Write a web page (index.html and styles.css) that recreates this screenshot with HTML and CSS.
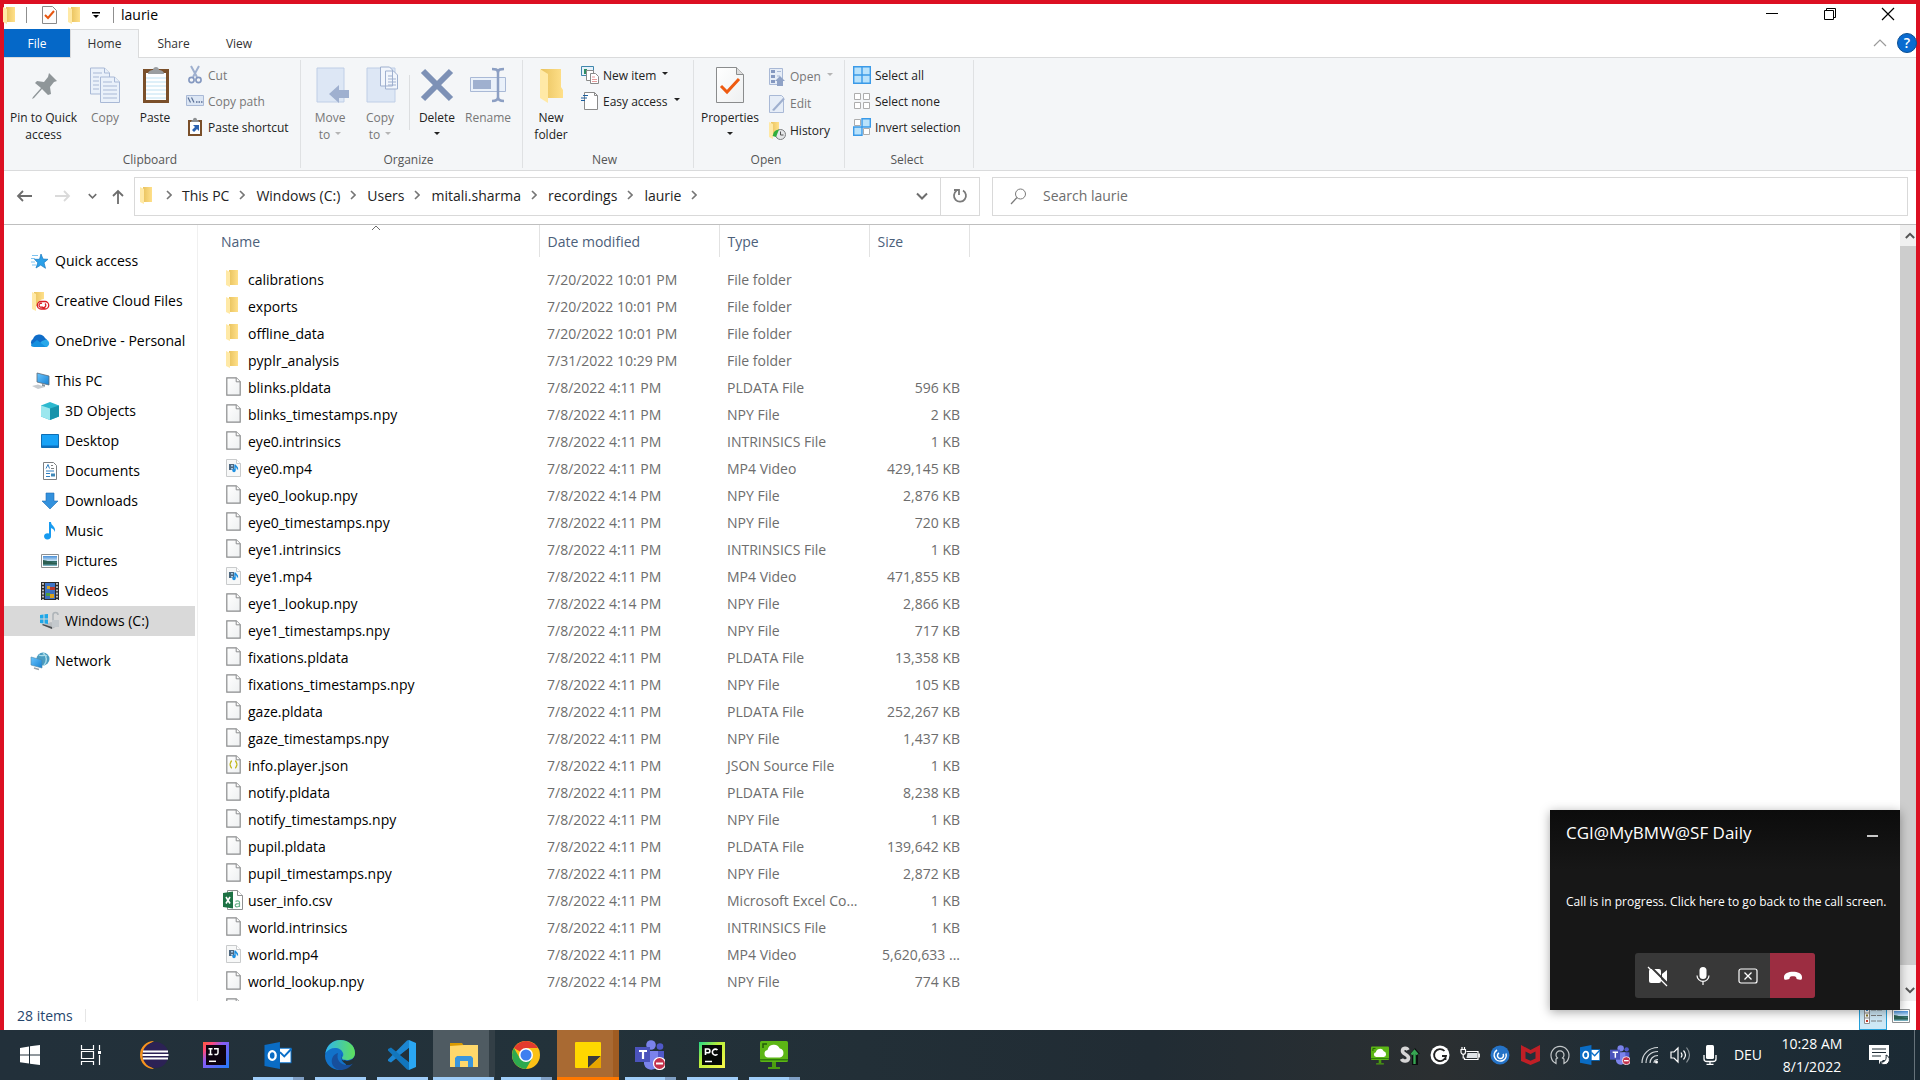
FILE: index.html
```html
<!DOCTYPE html>
<html lang="en">
<head>
<meta charset="utf-8">
<title>laurie</title>
<link rel="stylesheet" href="styles.css">
</head>
<body>
<svg class="sprite" aria-hidden="true">
  <defs>
    <linearGradient id="gFold" x1="0" x2="1"><stop offset="0" stop-color="#e9c35f"/><stop offset="1" stop-color="#ffe08a"/></linearGradient>
    <linearGradient id="gPage" x1="0" y1="0" x2="1" y2="1"><stop offset="0" stop-color="#fff"/><stop offset="1" stop-color="#eef0f1"/></linearGradient>
    <linearGradient id="gIJ" x1="0" y1="0" x2="1" y2="1"><stop offset="0" stop-color="#fd5b3a"/><stop offset=".2" stop-color="#fe4a7c"/><stop offset=".4" stop-color="#8a5cf6"/><stop offset="1" stop-color="#1f7bfa"/></linearGradient>
    <linearGradient id="gPC" x1="0" y1="0" x2="1" y2="1"><stop offset="0" stop-color="#21d789"/><stop offset=".4" stop-color="#b8ee3a"/><stop offset="1" stop-color="#fcf84a"/></linearGradient>
    <linearGradient id="gEdge" x1="0" y1="0" x2="1" y2="0"><stop offset="0" stop-color="#2fb5ef"/><stop offset="1" stop-color="#5fe05a"/></linearGradient>
    <linearGradient id="gMon" x1="0" y1="0" x2="1" y2="1"><stop offset="0" stop-color="#6cc6ff"/><stop offset="1" stop-color="#1581d2"/></linearGradient>
    <linearGradient id="gSky" x1="0" y1="0" x2="0" y2="1"><stop offset="0" stop-color="#4a90d8"/><stop offset=".5" stop-color="#cfe6f5"/><stop offset=".55" stop-color="#2f6a63"/><stop offset="1" stop-color="#7fb7c9"/></linearGradient>
  </defs>
  <symbol id="folder" viewBox="0 0 12 17"><path d="M3 0h9v15H3z" fill="url(#gFold)"/><path d="M0 0l4 2v15l-4-2z" fill="#ffe9a6"/></symbol>
  <symbol id="page" viewBox="0 0 15 19"><path d="M.8.8h9.4l4 4v13.4H.8z" fill="url(#gPage)" stroke="#8a8c8d" stroke-width="1.2"/><path d="M10.2.8v4h4" fill="#fff" stroke="#8a8c8d"/></symbol>
  <symbol id="video" viewBox="0 0 15 19"><path d="M.5 1.500h10l4 4v13H.5z" fill="#f7f8f8" stroke="#c9cbcc"/><path d="M10.500 1.500v4h4" fill="#fff" stroke="#c9cbcc"/><path d="M3 6h5v6H3z" fill="#4d6780"/><path d="M5 7h2v1.500H5zm0 3h2v1.500H5z" fill="#a8cbe8"/><path d="M9 6.500c0 2 3 2 2.500 5M9 6.500V12" fill="none" stroke="#1d8fe0" stroke-width="1.400"/><circle cx="8" cy="12.500" r="1.700" fill="#1d8fe0"/></symbol>
  <symbol id="json" viewBox="0 0 15 19"><path d="M.8.8h9.4l4 4v13.400H.8z" fill="url(#gPage)" stroke="#8a8c8d" stroke-width="1.200"/><path d="M10.200.8v4h4" fill="#fff" stroke="#8a8c8d"/><path d="M6 6c-2 0-1 3.500-2.500 3.500C5 9.500 4 13 6 13M9 6c2 0 1 3.500 2.500 3.500C10 9.500 11 13 9 13" fill="none" stroke="#c2b820" stroke-width="1.400"/></symbol>
  <symbol id="excel" viewBox="0 0 20 20"><path d="M4.500.5h10l5 5v14h-15z" fill="#fff" stroke="#8e9091"/><path d="M14.500.5v5h5" fill="#fff" stroke="#8e9091"/><path d="M0 3l10-1.500v17L0 17z" fill="#1d7244"/><path d="M3 7l4 6.500M7 7l-4 6.500" stroke="#fff" stroke-width="1.600"/><path d="M12.500 11.500c1-1 4-1 4 .8v4.700M16.500 13.500c-2 0-4.300.2-4.300 2s2.800 2 4.300 0" fill="none" stroke="#6cb38c" stroke-width="1.200"/></symbol>
  <symbol id="caret" viewBox="0 0 6 3"><path d="M0 0h6L3 3z" fill="currentColor"/></symbol>
  <symbol id="chev" viewBox="0 0 6 10"><path d="M1 1l4 4-4 4" fill="none" stroke="#767676" stroke-width="1.600"/></symbol>
  <symbol id="chevd" viewBox="0 0 12 8"><path d="M1 1.500l5 5 5-5" fill="none" stroke="currentColor" stroke-width="2"/></symbol>
  <symbol id="outlook" viewBox="0 0 28 28"><path d="M15 6h13v16H15z" fill="#0a72cc"/><path d="M16 7h11v14H16z" fill="#fff"/><path d="M16 10.500l4.500 4.500L28 7" fill="none" stroke="#0a6fc8" stroke-width="2"/><path d="M0 3l16-3v28L0 25z" fill="#0a6cc4"/><ellipse cx="8" cy="14" rx="3.600" ry="4.600" fill="none" stroke="#fff" stroke-width="2.400"/></symbol>
  <symbol id="teams" viewBox="0 0 30 30"><circle cx="16" cy="5" r="4.800" fill="#7b83eb"/><circle cx="25" cy="6.500" r="3.300" fill="#5059c9"/><path d="M19 11h10v8a5 5 0 0 1-7 5z" fill="#5059c9"/><path d="M9 11h14v10a7 7 0 0 1-14 3z" fill="#7b83eb"/><path d="M0 7h15v15H0z" fill="#4b53bc"/><path d="M4 11h8M8 11v8" stroke="#fff" stroke-width="2.200"/><circle cx="24.500" cy="23.500" r="6" fill="#c4314b" stroke="#fff" stroke-width="1.200"/><path d="M21 23.500h7" stroke="#fff" stroke-width="2"/></symbol>
  <symbol id="citrix" viewBox="0 0 28 28"><rect y="0" width="28" height="21" rx="1.500" fill="#5cb615"/><path d="M0 18h28v1.500H0z" fill="#2f7d0a"/><path d="M3 7V3h4" fill="none" stroke="#235c08" stroke-width="1.500"/><path d="M12 21h4v5h-4z" fill="#4b9c10"/><path d="M8 26h12v2H8z" fill="#4b9c10"/><path d="M8 16.500a3.800 3.800 0 0 1-.5-7.500 6.500 6.500 0 0 1 12.300-1.500 4.600 4.600 0 0 1 0 9z" fill="#fff"/></symbol>
  <symbol id="picture" viewBox="0 0 18 14"><path d="M.5.500h17v13H.5z" fill="#fff" stroke="#8d9092"/><path d="M2 2h14v10H2z" fill="url(#gSky)"/><path d="M2 6c4 0 8 3 14 3v1.500H2z" fill="#2c5f52"/></symbol>
</svg>

<div class="window">
  <header class="titlebar">
    <div class="quickbar">
      <svg class="i-fold-cut" viewBox="1 0 11 17"><use href="#folder" width="12" height="17"/></svg>
      <span class="bar bar-first"></span>
      <button aria-label="Properties"><svg width="15" height="18" viewBox="0 0 15 18"><path d="M.5.500h10l4 4v13H.5z" fill="#fdfdfd" stroke="#8a8a8a"/><path d="M3 9l3 3 6-7" fill="none" stroke="#e8560f" stroke-width="2"/></svg></button>
      <button aria-label="New folder"><svg width="12" height="17"><use href="#folder"/></svg></button>
      <button aria-label="Customize" class="cust"><svg width="8" height="7" viewBox="0 0 8 7"><path d="M0 0h8v1.500H0zM1 3h6L4 6z"/></svg></button>
      <span class="bar"></span>
      <h1>laurie</h1>
    </div>
    <div class="winbtns">
      <button aria-label="Minimize"><svg width="12" height="12" viewBox="0 0 12 12"><path d="M0 5.500h12" stroke="#000"/></svg></button>
      <button aria-label="Restore"><svg width="12" height="12" viewBox="0 0 12 12"><path d="M.5 2.500h9v9h-9zM2.500 2.500v-2h9v9h-2" fill="none" stroke="#000"/></svg></button>
      <button aria-label="Close"><svg width="12" height="12" viewBox="0 0 12 12"><path d="M0 0l12 12M12 0L0 12" stroke="#000" stroke-width="1.200"/></svg></button>
    </div>
  </header>

  <nav class="tabs">
    <button class="tab file">File</button>
    <button class="tab active">Home</button>
    <button class="tab">Share</button>
    <button class="tab view">View</button>
    <span class="grow"></span>
    <button class="collapse" aria-label="Minimize the ribbon"><svg width="14" height="8" viewBox="0 0 14 8"><path d="M1 7l6-6 6 6" fill="none" stroke="#9a9a9a" stroke-width="1.200"/></svg></button>
    <button class="help" aria-label="Help">?</button>
  </nav>

  <section class="ribbon">
    <div class="group g-clip">
      <div class="tools">
        <button class="big w78"><svg viewBox="0 0 36 36"><path d="M23 6l8 8-3 1-4 5 1 7-3 1-6-6-8 9-2 1 1-2 8-9-6-5 2-2 7 1 4-5z" fill="#8f9699"/></svg>Pin to Quick access</button>
        <button class="big w44 off"><svg viewBox="0 0 36 36"><g fill="#eaf1fa" stroke="#a9b9d6"><path d="M3.500 1h14l5 5v21h-19z"/><path d="M13.500 10h14l5 5v20.500h-19z"/><path d="M17.500 1v5h5M27.500 10v5h5" /></g><path d="M6 6h9M6 10h6M6 14h6M6 18h6M6 22h6M16 15h9M16 19h14M16 23h14M16 27h14M16 31h14" stroke="#a9b9d6"/></svg>Copy</button>
        <button class="big w56"><svg viewBox="0 0 36 36"><path d="M6 2h26v34H6z" fill="#7a4f2a"/><path d="M9 6h20v27H9z" fill="#fdfeff"/><path d="M9 11h20M9 15h20M9 19h20M9 23h20M9 27h20M9 31h20" stroke="#bfe0f2"/><path d="M11 7c0-3 3-4 5-4 0-4 6-4 6 0 2 0 5 1 5 4z" fill="#9a9da0"/></svg>Paste</button>
        <div class="small">
          <button class="off"><svg viewBox="0 0 18 18"><path d="M5 0l6 11M13 0L7 11" stroke="#9fb0cf" stroke-width="2"/><circle cx="5.500" cy="14" r="2.600" fill="none" stroke="#8498c0" stroke-width="1.600"/><circle cx="12.500" cy="14" r="2.600" fill="none" stroke="#8498c0" stroke-width="1.600"/></svg>Cut</button>
          <button class="off"><svg viewBox="0 0 18 18"><path d="M.5 3.500h17v10H.5z" fill="#dce6f4" stroke="#a9b9d6"/><path d="M2 5.500l2.500 5M5.500 5.500l2.500 5" stroke="#5a6f96" stroke-width="1.200"/><path d="M10 10h1.500m1 0H14m1 0h1.500" stroke="#5a6f96" stroke-width="1.500"/></svg>Copy path</button>
          <button><svg viewBox="0 0 18 18"><path d="M2 2h14v16H2z" fill="#7a4f2a"/><path d="M4 4h10v12H4z" fill="#fff"/><path d="M5 4c0-2 2-2 2-2 0-3 4-3 4 0 0 0 2 0 2 2z" fill="#8d9092"/><path d="M7 7h6v6l-2-2-3 3-2-2 3-3z" fill="#2b62b0"/></svg>Paste shortcut</button>
        </div>
      </div>
      <p class="glabel">Clipboard</p>
    </div>
    <div class="group g-org">
      <div class="tools">
        <button class="big w50 off"><svg viewBox="0 0 36 36"><path d="M5 1h27v34H5z" fill="#dde7f5" stroke="#bfcee6"/><path d="M17 27l10-9v5h10v8H27v5z" fill="#9fb0cf"/></svg>Move to<svg class="caret"><use href="#caret"/></svg></button>
        <button class="big w50 off"><svg viewBox="0 0 36 36"><path d="M5 1h28v34H5z" fill="#dde7f5" stroke="#bfcee6"/><path d="M18.500 0h9l3 3v16h-12zM23.500 4h8l4 4v14h-12z" fill="#f2f6fc" stroke="#9fb0cf"/><path d="M26 9h5M26 12h8M26 15h8M26 18h8" stroke="#9fb0cf"/></svg>Copy to<svg class="caret"><use href="#caret"/></svg></button>
        <span class="split"></span>
        <button class="big w46"><svg viewBox="0 0 36 36"><path d="M4 4l28 28M32 4L4 32" stroke="#7d91b6" stroke-width="6"/></svg>Delete<svg class="caret under"><use href="#caret"/></svg></button>
        <button class="big w56 off"><svg viewBox="0 0 36 36"><path d="M.5 10.500h35v14H.5z" fill="#eaf1fa" stroke="#a9b9d6"/><path d="M3 13h18v9H3z" fill="#9fb0cf"/><path d="M22 2c3 0 6 0 6 4v24c0 3-3 4-6 4M34 2c-3 0-6 0-6 4v24c0 3 3 4 6 4" fill="none" stroke="#8c9fc3" stroke-width="2.500"/></svg>Rename</button>
      </div>
      <p class="glabel">Organize</p>
    </div>
    <div class="group g-new">
      <div class="tools">
        <button class="big w50"><svg viewBox="0 0 36 36"><path d="M8 2h20v18l2 3v8H8z" fill="url(#gFold)"/><path d="M7 2l8 5v29l-8-5z" fill="#ffe9a6"/></svg>New folder</button>
        <div class="small">
          <button><svg viewBox="0 0 18 18"><path d="M.5.500h12v9H.5z" fill="#e6f2fa" stroke="#3f86ad"/><path d="M3 3h3v5H3z" fill="#2f8f63"/><path d="M5.500 4.500h7v10h-7z" fill="#fff" stroke="#8a8a8a"/><path d="M9.500 7.500h5l3 3v7h-8z" fill="#fff" stroke="#8a8a8a"/><path d="M11 11h3M11 13.500h5M11 15.500h5" stroke="#e59a9a"/></svg>New item<svg class="caret"><use href="#caret"/></svg></button>
          <button><svg viewBox="0 0 18 18"><path d="M3.500.500h10l3 3v14h-13z" fill="#fff" stroke="#8a8a8a"/><path d="M13.500.500v3h3" fill="none" stroke="#8a8a8a"/><path d="M2 3.500h5M0 6h6M0 8.500h4" stroke="#1d5f9e" stroke-width="1.200"/></svg>Easy access<svg class="caret"><use href="#caret"/></svg></button>
        </div>
      </div>
      <p class="glabel">New</p>
    </div>
    <div class="group g-open">
      <div class="tools">
        <button class="big w64"><svg viewBox="0 0 36 36"><path d="M4.500.500h20l7 7v28h-27z" fill="url(#gPage)" stroke="#8a8c8d"/><path d="M24.500.500v7h7" fill="#ddd" stroke="#8a8c8d"/><path d="M9 19l6 6 12-13" fill="none" stroke="#ee5a10" stroke-width="3"/></svg>Properties<svg class="caret under"><use href="#caret"/></svg></button>
        <div class="small tall">
          <button class="off"><svg viewBox="0 0 18 18"><path d="M1.500.500h13v16h-13z" fill="#e6edf7" stroke="#a9b9d6"/><path d="M3 2h4v3H3zm0 5h4v3H3zm0 5h4v3H3z" fill="#8498c0"/><path d="M9 3.500h4M9 8h3" stroke="#a9b9d6"/><path d="M12 8l5 5h-2v5H9v-5H7z" fill="#8fa2c6"/></svg>Open<svg class="caret"><use href="#caret"/></svg></button>
          <button class="off"><svg viewBox="0 0 18 18"><path d="M1.500.500h12l2 2v15h-14z" fill="#e6edf7" stroke="#a9b9d6"/><path d="M4 15L15 3l2 1L6 16z" fill="#9fb0cf"/></svg>Edit</button>
          <button><svg viewBox="0 0 18 18"><path d="M3 0h8v13H3z" fill="url(#gFold)"/><path d="M1 0l4 2v15l-4-2z" fill="#ffe9a6"/><circle cx="12.500" cy="12.500" r="5" fill="#e4e6e8" stroke="#7b7d7f"/><path d="M12.500 9.500v3.500h3" stroke="#555" fill="none"/><path d="M5 13a6 6 0 0 1 6-5.500l-1 2.500-2 5-3.500-1z" fill="#2fae3c"/></svg>History</button>
        </div>
      </div>
      <p class="glabel">Open</p>
    </div>
    <div class="group g-sel">
      <div class="tools">
        <div class="small">
          <button><svg viewBox="0 0 18 18"><g fill="#b9e2fb" stroke="#3a9ae8" stroke-width="1.400"><path d="M.7.700h8.300v8.300H.7zM9 .7h8.300v8.300H9zM.7 9h8.300v8.300H.7zM9 9h8.300v8.300H9z"/></g></svg>Select all</button>
          <button><svg viewBox="0 0 18 18"><path d="M1.500 1.500h6v6h-6zM10.500 1.500h6v6h-6zM1.500 10.500h6v6h-6zM10.500 10.500h6v6h-6z" fill="#fff" stroke="#adadad"/></svg>Select none</button>
          <button><svg viewBox="0 0 18 18"><path d="M1.500 1.500h6v6h-6zM10.500 10.500h6v6h-6z" fill="#fff" stroke="#adadad"/><path d="M9 .7h8.300v8.300H9zM.7 9h8.300v8.300H.7z" fill="#b9e2fb" stroke="#3a9ae8" stroke-width="1.400"/></svg>Invert selection</button>
        </div>
      </div>
      <p class="glabel">Select</p>
    </div>
  </section>

  <div class="addressrow">
    <div class="navbtns">
      <button aria-label="Back"><svg width="16" height="12" viewBox="0 0 16 12"><path d="M16 6H2M7 1L2 6l5 5" fill="none" stroke="#6d6d6d" stroke-width="1.800"/></svg></button>
      <button aria-label="Forward"><svg width="16" height="12" viewBox="0 0 16 12"><path d="M0 6h14M9 1l5 5-5 5" fill="none" stroke="#dadada" stroke-width="1.800"/></svg></button>
      <button aria-label="Recent" class="thin"><svg width="9" height="6" viewBox="0 0 12 8"><use href="#chevd" width="12" height="8"/></svg></button>
      <button aria-label="Up" class="thin"><svg width="12" height="15" viewBox="0 0 12 15"><path d="M6 15V2M1 7l5-5 5 5" fill="none" stroke="#6d6d6d" stroke-width="1.800"/></svg></button>
    </div>
    <div class="address">
      <svg class="afold" width="12" height="17"><use href="#folder"/></svg>
      <svg class="sep"><use href="#chev"/></svg><a href="#">This PC</a>
      <svg class="sep"><use href="#chev"/></svg><a href="#">Windows (C:)</a>
      <svg class="sep"><use href="#chev"/></svg><a href="#">Users</a>
      <svg class="sep"><use href="#chev"/></svg><a href="#">mitali.sharma</a>
      <svg class="sep"><use href="#chev"/></svg><a href="#">recordings</a>
      <svg class="sep"><use href="#chev"/></svg><a href="#">laurie</a>
      <svg class="sep"><use href="#chev"/></svg>
      <span class="grow"></span>
      <button class="adrop" aria-label="Previous locations"><svg width="12" height="8"><use href="#chevd"/></svg></button>
      <button class="refresh" aria-label="Refresh"><svg width="16" height="16" viewBox="0 0 16 16"><path d="M11 2.500a6 6 0 1 1-6.500.3" fill="none" stroke="#7a7a7a" stroke-width="1.800"/><path d="M2 2h5v5" fill="none" stroke="#7a7a7a" stroke-width="1.800"/></svg></button>
    </div>
    <label class="search"><svg width="17" height="17" viewBox="0 0 17 17"><circle cx="10.500" cy="6" r="5" fill="none" stroke="#7a7a7a"/><path d="M7 9.500L1 16" stroke="#7a7a7a" stroke-width="1.200"/></svg><input type="text" aria-label="Search laurie" placeholder="Search laurie"></label>
  </div>

  <div class="content">
    <nav class="sidebar">
      <a href="#" class="top"><svg viewBox="0 0 20 20"><path d="M11 3l2 5 5 .3-4 3.400 1.500 5.600-4.800-3.200L6 17l1.800-5.200L4.500 8.300h5z" fill="#2ba0e8" stroke="#1878c0" stroke-width=".7"/><path d="M2 4.500h6M1 7.500h4M1 11h4M2 14h4" stroke="#7fc4f0"/></svg>Quick access</a>
      <a href="#" class="top"><svg viewBox="0 0 20 20"><path d="M4 1h10v14H4z" fill="url(#gFold)"/><path d="M2 1l4 2v17l-4-2z" fill="#ffe9a6"/><circle cx="14" cy="14" r="6" fill="#fff"/><path d="M11 10.500h4a3.600 3.600 0 0 1 0 7.500h-4a3.600 3.600 0 0 1 0-7.500zm1 2a2 2 0 1 0 0 3.500 2 2 0 1 0 3-3.500" fill="none" stroke="#da1f26" stroke-width="1.300"/></svg>Creative Cloud Files</a>
      <a href="#" class="top"><svg viewBox="0 0 20 20"><path d="M3 15a4 4 0 0 1 0-7 6.500 6.500 0 0 1 12-1 5 5 0 0 1 1 8z" fill="#0f6cc8"/><path d="M6 16l6-6 4-1.500a4 4 0 0 1 1 7.500z" fill="#28a8ea"/><path d="M1 14l6-5 9 7H4c-2 0-3-1-3-2z" fill="#1490df"/></svg>OneDrive - Personal</a>
      <a href="#" class="top"><svg viewBox="0 0 20 20"><path d="M7 2l12 3v9L7 11z" fill="url(#gMon)" stroke="#5c6b78" stroke-width=".8"/><path d="M2 15l6-1.500 7 2.500-7 2z" fill="#c8ccd0"/><path d="M12 13l3 .8v2l-3-.8z" fill="#8a949c"/></svg>This PC</a>
      <a href="#" class="sub"><svg viewBox="0 0 20 20"><path d="M10 1l9 3.500v11L10 19l-9-3.500v-11z" fill="#2db9cf"/><path d="M1 4.500l9 3V19l-9-3.500z" fill="#9be7ee"/><path d="M19 4.500l-9 3V19l9-3.500z" fill="#1793ab"/></svg>3D Objects</a>
      <a href="#" class="sub"><svg viewBox="0 0 20 20"><path d="M1.500 3.500h17v13h-17z" fill="#18a2f6" stroke="#0f6eb4"/><path d="M2 14.500h16v1.500H2z" fill="#0b6fc2"/></svg>Desktop</a>
      <a href="#" class="sub"><svg viewBox="0 0 20 20"><path d="M3.500 1.500h10l3 3v14h-13z" fill="#fff" stroke="#7d8082"/><path d="M6 7.500l2-4 1.500 4M6 10h8M6 12.500h4M6 15.500h4" stroke="#2f7fc0" fill="none"/><path d="M11 4.500h2M11 7.500h3" stroke="#7d8082"/><path d="M11 12.500h4v3h-4z" fill="#3f88b8"/></svg>Documents</a>
      <a href="#" class="sub"><svg viewBox="0 0 20 20"><path d="M6 2h8v8h4l-8 8-8-8h4z" fill="#3391dd" stroke="#1f6db2" stroke-width=".6"/></svg>Downloads</a>
      <a href="#" class="sub"><svg viewBox="0 0 20 20"><path d="M9 1h2c0 4 5 4 4 10-1-3-3-3.500-4-4v8a3.500 3.200 0 1 1-2-2.500z" fill="#189bf0"/></svg>Music</a>
      <a href="#" class="sub"><svg viewBox="-1 -3 20 20"><use href="#picture" width="18" height="14"/></svg>Pictures</a>
      <a href="#" class="sub"><svg viewBox="0 0 20 20"><path d="M1 1h18v18H1z" fill="#2b2b2b"/><path d="M5 2h10v8H5z" fill="#3e74c6"/><path d="M5 10h10v8H5z" fill="#3c6fbf"/><path d="M7 5h3v3H7zM10 13h4v4h-4z" fill="#d9a21e"/><path d="M10 6h5v3h-5z" fill="#b8382c"/><path d="M6 12h4v3H6z" fill="#4f9e3b"/><path d="M3 2v17M17 2v17" stroke="#e6e6e6" stroke-width="1.600" stroke-dasharray="1.800 1.400"/></svg>Videos</a>
      <a href="#" class="sub sel"><svg viewBox="0 0 20 20"><path d="M3 14l8-3 8 3-7 4z" fill="#b9bdc0"/><path d="M2 14l10 4v-2L3 13z" fill="#4a4d50"/><path d="M0 4l3.500-.5v4H0zM4.500 3.300L8 3v4.500H4.500zM0 8.500h3.500v4L0 12zM4.500 8.500H8V13l-3.500-.4z" fill="#1ea7e8"/><path d="M12 9h7v7h-7z" fill="#c3c8cc"/><path d="M13 9V4a2.500 2.500 0 0 1 5 0" fill="none" stroke="#aeb4b8" stroke-width="1.600"/></svg>Windows (C:)</a>
      <a href="#" class="top"><svg viewBox="0 0 20 20"><circle cx="13" cy="8" r="6.500" fill="#4a9cc0"/><path d="M9 4c3 2 5-1 8 1M13 1.500c4 4 4 9 1 13" stroke="#a9dbe8" fill="none" stroke-width="1.400"/><path d="M1 6l11 3v8L1 14z" fill="url(#gMon)" stroke="#4f88a8" stroke-width=".6"/><path d="M4 17l5 1.500" stroke="#9aa3a9" stroke-width="1.500"/></svg>Network</a>
    </nav>

    <main class="listing">
      <table>
        <colgroup><col class="c-name"><col class="c-date"><col class="c-type"><col class="c-size"></colgroup>
        <thead><tr><th class="name">Name<svg class="sort" viewBox="0 0 10 6"><path d="M1 5l4-4 4 4" fill="none" stroke="#6d6d6d"/></svg></th><th>Date modified</th><th>Type</th><th>Size</th></tr></thead>
        <tbody>
          <tr><td><svg class="fo"><use href="#folder"/></svg>calibrations</td><td>7/20/2022 10:01 PM</td><td>File folder</td><td></td></tr>
          <tr><td><svg class="fo"><use href="#folder"/></svg>exports</td><td>7/20/2022 10:01 PM</td><td>File folder</td><td></td></tr>
          <tr><td><svg class="fo"><use href="#folder"/></svg>offline_data</td><td>7/20/2022 10:01 PM</td><td>File folder</td><td></td></tr>
          <tr><td><svg class="fo"><use href="#folder"/></svg>pyplr_analysis</td><td>7/31/2022 10:29 PM</td><td>File folder</td><td></td></tr>
          <tr><td><svg><use href="#page"/></svg>blinks.pldata</td><td>7/8/2022 4:11 PM</td><td>PLDATA File</td><td>596 KB</td></tr>
          <tr><td><svg><use href="#page"/></svg>blinks_timestamps.npy</td><td>7/8/2022 4:11 PM</td><td>NPY File</td><td>2 KB</td></tr>
          <tr><td><svg><use href="#page"/></svg>eye0.intrinsics</td><td>7/8/2022 4:11 PM</td><td>INTRINSICS File</td><td>1 KB</td></tr>
          <tr><td><svg><use href="#video"/></svg>eye0.mp4</td><td>7/8/2022 4:11 PM</td><td>MP4 Video</td><td>429,145 KB</td></tr>
          <tr><td><svg><use href="#page"/></svg>eye0_lookup.npy</td><td>7/8/2022 4:14 PM</td><td>NPY File</td><td>2,876 KB</td></tr>
          <tr><td><svg><use href="#page"/></svg>eye0_timestamps.npy</td><td>7/8/2022 4:11 PM</td><td>NPY File</td><td>720 KB</td></tr>
          <tr><td><svg><use href="#page"/></svg>eye1.intrinsics</td><td>7/8/2022 4:11 PM</td><td>INTRINSICS File</td><td>1 KB</td></tr>
          <tr><td><svg><use href="#video"/></svg>eye1.mp4</td><td>7/8/2022 4:11 PM</td><td>MP4 Video</td><td>471,855 KB</td></tr>
          <tr><td><svg><use href="#page"/></svg>eye1_lookup.npy</td><td>7/8/2022 4:14 PM</td><td>NPY File</td><td>2,866 KB</td></tr>
          <tr><td><svg><use href="#page"/></svg>eye1_timestamps.npy</td><td>7/8/2022 4:11 PM</td><td>NPY File</td><td>717 KB</td></tr>
          <tr><td><svg><use href="#page"/></svg>fixations.pldata</td><td>7/8/2022 4:11 PM</td><td>PLDATA File</td><td>13,358 KB</td></tr>
          <tr><td><svg><use href="#page"/></svg>fixations_timestamps.npy</td><td>7/8/2022 4:11 PM</td><td>NPY File</td><td>105 KB</td></tr>
          <tr><td><svg><use href="#page"/></svg>gaze.pldata</td><td>7/8/2022 4:11 PM</td><td>PLDATA File</td><td>252,267 KB</td></tr>
          <tr><td><svg><use href="#page"/></svg>gaze_timestamps.npy</td><td>7/8/2022 4:11 PM</td><td>NPY File</td><td>1,437 KB</td></tr>
          <tr><td><svg><use href="#json"/></svg>info.player.json</td><td>7/8/2022 4:11 PM</td><td>JSON Source File</td><td>1 KB</td></tr>
          <tr><td><svg><use href="#page"/></svg>notify.pldata</td><td>7/8/2022 4:11 PM</td><td>PLDATA File</td><td>8,238 KB</td></tr>
          <tr><td><svg><use href="#page"/></svg>notify_timestamps.npy</td><td>7/8/2022 4:11 PM</td><td>NPY File</td><td>1 KB</td></tr>
          <tr><td><svg><use href="#page"/></svg>pupil.pldata</td><td>7/8/2022 4:11 PM</td><td>PLDATA File</td><td>139,642 KB</td></tr>
          <tr><td><svg><use href="#page"/></svg>pupil_timestamps.npy</td><td>7/8/2022 4:11 PM</td><td>NPY File</td><td>2,872 KB</td></tr>
          <tr><td><svg class="xl"><use href="#excel"/></svg>user_info.csv</td><td>7/8/2022 4:11 PM</td><td>Microsoft Excel Co...</td><td>1 KB</td></tr>
          <tr><td><svg><use href="#page"/></svg>world.intrinsics</td><td>7/8/2022 4:11 PM</td><td>INTRINSICS File</td><td>1 KB</td></tr>
          <tr><td><svg><use href="#video"/></svg>world.mp4</td><td>7/8/2022 4:11 PM</td><td>MP4 Video</td><td>5,620,633 ...</td></tr>
          <tr><td><svg><use href="#page"/></svg>world_lookup.npy</td><td>7/8/2022 4:14 PM</td><td>NPY File</td><td>774 KB</td></tr>
          <tr><td><svg><use href="#page"/></svg></td><td></td><td></td><td></td></tr>
        </tbody>
      </table>
    </main>
    <div class="scroll">
      <button aria-label="Scroll up"><svg width="10" height="7" viewBox="0 0 12 8"><path d="M1 7l5-5 5 5" fill="none" stroke="#555" stroke-width="2.400"/></svg></button>
      <span class="thumb"></span>
      <button class="down" aria-label="Scroll down"><svg width="10" height="7" viewBox="0 0 12 8"><path d="M1 1l5 5 5-5" fill="none" stroke="#555" stroke-width="2.400"/></svg></button>
    </div>
  </div>

  <footer class="status">
    <span class="count">28 items</span>
    <span class="grow"></span>
    <button class="details" aria-label="Details view"><svg width="18" height="18" viewBox="0 0 18 18"><path d="M.5.500h5v16h-5zM.5 6h5M.5 11h5" fill="#fff" stroke="#8d9092"/><path d="M2 2h2v2H2z" fill="#2f7fc0"/><path d="M2 7.500h2v2H2z" fill="#8a7a2a"/><path d="M2 13h2v2H2z" fill="#c83a2a"/><path d="M7 3h5m1 0h5M7 8.500h5m1 0h5M7 14h5m1 0h5" stroke="#7d8082"/></svg></button>
    <button class="thumbs" aria-label="Thumbnail view"><svg width="18" height="14"><use href="#picture"/></svg></button>
  </footer>
</div>

<aside class="call">
  <div class="callhead"><h2>CGI@MyBMW@SF Daily</h2><button aria-label="Minimize call"><svg width="11" height="2"><path d="M0 0h11v2H0z" fill="#c8c8c8"/></svg></button></div>
  <p>Call is in progress. Click here to go back to the call screen.</p>
  <div class="callbtns">
    <button aria-label="Turn camera on"><svg width="20" height="20" viewBox="0 0 20 20"><rect x="1" y="3" width="12" height="14" rx="2" fill="#fff"/><path d="M14 8l5-4v12l-5-4z" fill="#fff"/><path d="M2 0l19 19" stroke="#383838" stroke-width="2"/><path d="M0 1l19 19" stroke="#fff" stroke-width="1.200"/></svg></button>
    <button aria-label="Mute"><svg width="20" height="20" viewBox="0 0 20 20"><rect x="6.500" y="1" width="7" height="12" rx="3.500" fill="#fff"/><path d="M4 9.500a6 5.800 0 0 0 12 0M10 15.500V19" fill="none" stroke="#fff" stroke-width="1.200"/></svg></button>
    <button aria-label="Stop sharing"><svg width="20" height="20" viewBox="0 0 20 20"><rect x="1" y="3" width="18" height="14" rx="2" fill="none" stroke="#fff" stroke-width="1.200"/><path d="M6.500 6.500l7 7M13.500 6.500l-7 7" stroke="#fff" stroke-width="1.300"/></svg></button>
    <button class="hang" aria-label="Leave call"><svg width="20" height="20" viewBox="0 0 20 20"><path d="M1 11c0-7 18-7 18 0v1c0 1.500-1 2-2 1.800l-2.500-.5c-1-.2-1.300-1-1.300-2 0-1.500-6.400-1.500-6.400 0 0 1-.3 1.800-1.300 2L3 13.800C2 14 1 13.500 1 12z" fill="#fff"/></svg></button>
  </div>
</aside>

<footer class="taskbar">
  <button class="task narrow" aria-label="Start"><svg width="20" height="20" viewBox="0 0 20 20"><path d="M0 3l9-1.500v8H0zM10 1.300L20 0v9.500H10zM0 10.500h9v8L0 17.200zM10 10.500h10V20l-10-1.300z" fill="#fff"/></svg></button>
  <button class="task task-view" aria-label="Task View"><svg width="21" height="20" viewBox="0 0 21 20"><path d="M.5 0v4.500h12V0M.5 20v-3.500h12V20M.5 6.500h12v7H.5zM18.500 0v5M18.500 10v10" fill="none" stroke="#fff" stroke-width="1.200"/><path d="M17 6h3v3h-3z" fill="#fff"/></svg></button>
  <button class="task" aria-label="Eclipse"><svg width="30" height="28" viewBox="0 0 30 28"><path d="M15 0a14 14 0 1 0 0 28A16 16 0 0 1 15 0z" fill="#f7941e"/><circle cx="16.500" cy="14" r="13" fill="#2c2255"/><path d="M4 10.500h25M3.500 14h26M4 17.500h25" stroke="#fff" stroke-width="2"/></svg></button>
  <button class="task" aria-label="IntelliJ IDEA"><svg width="26" height="26" viewBox="0 0 26 26"><path d="M0 0h26v26H0z" fill="url(#gIJ)"/><path d="M3 3h20v20H3z" fill="#0d0210"/><path d="M5.500 6.700h4M7.500 6.700v5.800M5.500 12.500h4M11 6.700h4v4c0 2-2 2.200-3.500 1.500" fill="none" stroke="#fff" stroke-width="1.500"/><path d="M6 19.300h7" stroke="#fff" stroke-width="1.500"/></svg></button>
  <button class="task run multi" aria-label="Outlook"><svg width="28" height="27"><use href="#outlook"/></svg></button>
  <button class="task run" aria-label="Edge"><svg width="30" height="30" viewBox="0 0 30 30"><path d="M0 16C0 6 8 0 15 0c9 0 15 6 15 13 0 5-4 8-8 8l-3-1 3 7-7 3C7 30 0 24 0 16z" fill="#1272c9"/><path d="M0.500 13C2 5 8 0 15 0c9 0 15 6 15 13 0 5-4 7-8 7-3 0-5-1-5-2 0-1 2-2 1-5-1-3-4-5-8-5-4 0-7.500 2-9.500 5z" fill="url(#gEdge)"/><path d="M14 30C4 27 5 15 13 13c-2 6 2 12 9 12 2 0 4-.5 6-1.500-3 4-8 7-14 6.500z" fill="#174f9c"/><path d="M17 14c0 2-1 3-1 4 0 2 3 3 6 3 3 0 6-1 7-3 0 3-1 5-2 6-6 2-13-3-10-10z" fill="#223038"/></svg></button>
  <button class="task run" aria-label="Visual Studio Code"><svg width="30" height="30" viewBox="0 0 30 30"><path d="M22 22V8L4 22.500 1 21V19.500L20 .5 22 0z" fill="#1c86d2"/><path d="M22 8v14L4 7.500 1 9v1.500l19 19 2 .5z" fill="#1276bd"/><path d="M22 8l-9 7 9 7z" fill="#23313a"/><path d="M22 0l7 3v24l-7 3z" fill="#2aa6f2"/></svg></button>
  <button class="task run current" aria-label="File Explorer"><svg width="28" height="24" viewBox="0 0 28 24"><path d="M0 0h12l2 3H0z" fill="#d99a00"/><path d="M0 3l14-1h14v22H0z" fill="#ffd86b"/><path d="M5 24V15l2-2h14l2 2v9h-5v-6h-8v6z" fill="#3a96dd"/></svg></button>
  <button class="task run multi" aria-label="Chrome"><svg width="28" height="28" viewBox="0 0 28 28"><circle cx="14" cy="14" r="14" fill="#fbc116"/><path d="M14 14L1.900 7A14 14 0 0 1 26.100 7H14z" fill="#e33b2e"/><path d="M1.900 7A14 14 0 0 0 14 28l6-10.500-6-3.500-6 3.500z" fill="#2da94f"/><circle cx="14" cy="14" r="7" fill="#fff"/><circle cx="14" cy="14" r="5.500" fill="#3e7ff0"/></svg></button>
  <button class="task notes" aria-label="Sticky Notes"><svg width="26" height="26" viewBox="0 0 26 26"><rect width="26" height="26" rx="1" fill="#ffd800"/><path d="M13 26V14h13z" fill="#3b3b3b"/><path d="M13 26h13V14z" fill="#e8a500"/></svg></button>
  <button class="task run multi" aria-label="Teams"><svg width="30" height="30"><use href="#teams"/></svg></button>
  <button class="task run" aria-label="PyCharm"><svg width="26" height="26" viewBox="0 0 26 26"><path d="M0 0h26v26H0z" fill="url(#gPC)"/><path d="M3 3h20v20H3z" fill="#050805"/><path d="M6.500 13V7h2.500a1.900 1.900 0 0 1 0 3.800H6.500M18.500 8a3 3 0 1 0 0 4.200" fill="none" stroke="#fff" stroke-width="1.600"/><path d="M6 19.500h7" stroke="#fff" stroke-width="1.500"/></svg></button>
  <button class="task run multi" aria-label="Citrix Workspace"><svg width="28" height="28"><use href="#citrix"/></svg></button>
  <span class="grow"></span>
  <div class="tray">
    <button aria-label="Desktop viewer"><svg width="18" height="19"><use href="#citrix"/></svg></button>
    <button aria-label="Sync"><svg width="20" height="20" viewBox="0 0 20 20"><path d="M8 5C7 2.500 2.500 2.500 2.500 6S8.500 9 8.500 13c0 3.500-5.500 4-7 1" fill="none" stroke="#d6d6d6" stroke-width="3.600"/><path d="M10 9l5-6 5 6h-2v11h-6V9z" fill="#0c0f10"/><path d="M14.500 19V7M11.500 9.500l3-3.500 3 3.500" fill="none" stroke="#36a552" stroke-width="2.400"/></svg></button>
    <button aria-label="Grammarly"><svg width="20" height="20" viewBox="0 0 20 20"><circle cx="10" cy="10" r="9.500" fill="#fff"/><path d="M14.500 6A6 6 0 1 0 16 11h-4M15.500 11v4" fill="none" stroke="#222" stroke-width="1.800"/></svg></button>
    <button aria-label="Battery"><svg width="20" height="20" viewBox="0 0 20 20"><path d="M6.500 6.500H18v8H4.500V13M19.300 8.500v4M1 4.500h4.500V7a2.200 2.200 0 0 1-4.500 0zM2 4.500V2M4.500 4.500V2M3.200 9v4h1.500" fill="none" stroke="#fff" stroke-width="1.200"/><path d="M7.500 8H17v5H6.500z" fill="#dfe3e6"/></svg></button>
    <button aria-label="Receiver"><svg width="20" height="20" viewBox="0 0 20 20"><circle cx="10" cy="10" r="9.500" fill="#2573c7"/><path d="M16 8.500A6 6 0 1 1 7 5M13 9a3 3 0 1 1-4-1" fill="none" stroke="#fff" stroke-width="1.500"/></svg></button>
    <button aria-label="McAfee"><svg width="19" height="20" viewBox="0 0 19 20"><path d="M0 0l9.500 5L19 0v16l-9.500 4L0 16z" fill="#c01f26"/><path d="M4.500 6.500l5 2.600 5-2.600v7l-5 2.200-5-2.200z" fill="#22303a"/></svg></button>
    <button aria-label="VPN"><svg width="20" height="20" viewBox="0 0 20 20"><path d="M6 18.500a9 9 0 1 1 8 0v-4.500l-1.500-1a4 4 0 1 0-5 0L6 14z" fill="none" stroke="#c4c8ca" stroke-width="1.200"/></svg></button>
    <button aria-label="Outlook"><svg width="20" height="20"><use href="#outlook"/></svg></button>
    <button aria-label="Teams"><svg width="20" height="20"><use href="#teams"/></svg></button>
    <button aria-label="Network"><svg width="18" height="18" viewBox="0 0 18 18"><path d="M1 17C1 8 8 1.500 17 1.500M5 17C5 10 10 5.500 17 5.500M9 17c0-4 3-7.500 8-7.500M13 17c0-2 1-3.500 4-3.500" fill="none" stroke="#d5dadd" stroke-width="1.200"/><circle cx="15.500" cy="16" r="1.500" fill="#fff"/></svg></button>
    <button aria-label="Volume"><svg width="21" height="18" viewBox="0 0 21 18"><path d="M1 6h3l4-4v14l-4-4H1z" fill="none" stroke="#fff" stroke-width="1.200"/><path d="M11 6.500q2 2.500 0 5M13.500 4.500q4 4.500 0 9" fill="none" stroke="#fff" stroke-width="1.200"/><path d="M16.500 1.500q6 7.500 0 15" fill="none" stroke="#8a9297" stroke-width="1.200"/></svg></button>
    <button aria-label="Microphone"><svg width="14" height="20" viewBox="0 0 14 20"><rect x="3" width="8" height="14" rx="1.500" fill="#fff"/><path d="M1 10v4c0 2 2 2.500 3 2.500h6c1 0 3-.5 3-2.500v-4M7 16v3M3.500 19.300h7" fill="none" stroke="#fff" stroke-width="1.300"/></svg></button>
  </div>
  <button class="lang">DEU</button>
  <button class="clock"><span>10:28 AM</span><span>8/1/2022</span></button>
  <button class="notif" aria-label="Notifications"><svg width="20" height="20" viewBox="0 0 20 20"><path d="M0 0h20v15h-6l-4 4v-4H0z" fill="#fff"/><path d="M3 4h14M3 7.500h14M3 11h9" stroke="#1f2c35" stroke-width="1.200"/><path d="M17 10a5 5 0 1 1-6 7c4 1 7-2 6-7z" fill="#fff" stroke="#1f2c35"/></svg></button>
  <button class="peek" aria-label="Show desktop"></button>
</footer>
</body>
</html>
```
FILE: styles.css
```css
* { box-sizing: border-box; }
html, body { height: 100%; }
body {
  margin: 0;
  display: flex;
  flex-direction: column;
  overflow: hidden;
  background: #fff;
  color: #000;
  font: 14px/20px "Open Sans", "Noto Sans", sans-serif;
}
.sprite { position: absolute; width: 0; height: 0; }
button {
  border: 0;
  padding: 0;
  margin: 0;
  background: none;
  color: inherit;
  font: inherit;
}
a { color: inherit; text-decoration: none; }
svg { flex: none; display: block; overflow: visible; }
p, h1, h2 { margin: 0; font-weight: 400; }
.grow { flex: 1; }

.window {
  flex: 1;
  min-height: 0;
  display: flex;
  flex-direction: column;
  border: 4px solid #dc1022;
  border-bottom: 0;
}

/* title bar */
.titlebar { display: flex; justify-content: space-between; height: 25px; flex: none; }
.quickbar { display: flex; align-items: center; padding-bottom: 3px; }
.i-fold-cut { width: 11px; height: 17px; }
.bar { width: 1px; height: 16px; background: #8f8f8f; }
.bar-first { margin: 0 15px 0 11px; }
.quickbar button + button { margin-left: 11px; }
.quickbar .cust { margin: 0 13px 0 12px; }
.quickbar h1 { font-size: 14px; margin-left: 7px; }
.winbtns { display: flex; }
.winbtns button { width: 58px; display: grid; place-items: center; padding: 0 0 6px 2px; }

/* tabs */
.tabs { display: flex; align-items: flex-end; height: 29px; flex: none; border-bottom: 1px solid #dadbdc; font-size: 12px; }
.tab { width: 69px; height: 28px; padding-top: 1px; color: #333; }
.file { width: 66px; background: #0568c8; color: #fff; }
.active { height: 29px; margin-bottom: -1px; padding-top: 0; background: #f4f6f8; border: 1px solid #dadbdc; border-bottom: 0; }
.view { width: 62px; }
.collapse { display: grid; place-items: center; height: 28px; width: 26px; }
.help { width: 20px; height: 20px; margin: 0 -1px 4px 4px; border-radius: 50%; border: 1px solid #0b4f92; background: #0a6bd0; color: #fff; font-weight: 600; font-size: 14px; line-height: 18px; }

/* ribbon */
.ribbon { display: flex; height: 113px; flex: none; padding: 2px 0; background: #f4f6f8; border-bottom: 1px solid #dadbdc; font-size: 12px; line-height: 17px; color: #222; }
.group { display: flex; flex-direction: column; justify-content: space-between; border-right: 1px solid #dfe1e3; flex: none; }
.g-clip { width: 297px; }
.g-org { width: 222px; padding-left: 4px; }
.g-new { width: 171px; padding-left: 3px; }
.g-open { width: 151px; padding-left: 4px; }
.g-sel { width: 129px; padding-left: 6px; }
.tools { display: flex; }
.glabel { padding-right: 10px; text-align: center; color: #555; }
.g-clip .glabel { padding-right: 4px; }
.big { position: relative; padding: 7px 0 0; text-align: center; align-self: flex-start; }
.big > svg:first-child { width: 36px; height: 36px; margin: 0 auto 6px; }
.w78 { width: 79px; padding-left: 2px; padding-right: 2px; }
.w64 { width: 64px; }
.w56 { width: 56px; }
.w50 { width: 50px; padding-left: 4px; padding-right: 4px; }
.w46 { width: 46px; }
.w44 { width: 44px; }
.off { color: #777; }
.caret { display: inline-block; width: 6px; height: 3px; margin: 0 0 4px 5px; vertical-align: baseline; }
.off .caret { color: #b5b5b5; }
.caret.under { display: block; margin: 6px auto 0; }
.split { width: 1px; height: 55px; margin: 15px 4px 0; background: #dcdee0; }
.small { display: flex; flex-direction: column; padding: 2px 0 0 3px; }
.g-sel .small { padding-left: 2px; }
.g-new .small { padding-left: 5px; }
.g-open .small { padding-left: 6px; }
.small button { display: flex; align-items: center; gap: 4px; height: 26px; white-space: nowrap; }
.small.tall { padding-top: 3px; }
.small.tall button { height: 27px; }
.small button > svg:first-child { width: 18px; height: 18px; }
.small .caret { margin: 0 0 4px 2px; }

/* address row */
.addressrow { display: flex; align-items: center; height: 53px; flex: none; padding: 0 8px 3px 0; color: #222; }
.navbtns { display: flex; align-items: center; width: 130px; padding-left: 12px; color: #6d6d6d; }
.navbtns button + button { margin-left: 23px; }
.navbtns button.thin { margin-left: 17px; }
.navbtns button.thin + button.thin { margin-left: 15px; }
.address { display: flex; align-items: center; width: 846px; height: 39px; border: 1px solid #d9d9d9; }
.afold { margin: 0 4px 2px 5px; }
.sep { width: 6px; height: 10px; margin: 0 10px 3px; }
.sep + a + .sep { margin-right: 11px; }
.address a { white-space: nowrap; }
.adrop { width: 36px; height: 37px; display: grid; place-items: center; color: #6d6d6d; }
.refresh { width: 39px; height: 37px; display: grid; place-items: center; border-left: 1px solid #d9d9d9; }
.search { flex: 1; display: flex; align-items: center; gap: 16px; height: 39px; margin-left: 12px; padding-left: 17px; border: 1px solid #d9d9d9; }
.search input { flex: 1; border: 0; outline: 0; padding: 0; background: none; font: inherit; }
.search input::placeholder { color: #6d6d6d; opacity: 1; }

/* content */
.content { flex: 1; min-height: 0; display: flex; border-top: 1px solid #bfbfbf; }
.sidebar { width: 194px; flex: none; padding: 11px 2px 0 0; border-right: 1px solid #f0f0f0; }
.sidebar a { display: flex; align-items: center; gap: 5px; height: 30px; white-space: nowrap; }
.sidebar svg { width: 20px; height: 20px; }
.top { margin-top: 10px; padding-left: 26px; }
.sub { padding-left: 36px; }
.sel { background: #d9d9d9; }
.listing { flex: 1; overflow: hidden; }
table { table-layout: fixed; border-collapse: collapse; width: 771px; }
.c-name { width: 341px; }
.c-date { width: 180px; }
.c-type { width: 150px; }
.c-size { width: 100px; }
th { position: relative; height: 32px; padding: 1px 0 0 8px; border-right: 1px solid #e2e2e2; text-align: left; font-weight: 400; color: #4c607a; }
th.name { padding-left: 23px; }
.sort { position: absolute; left: 173px; top: 0; width: 10px; height: 6px; }
tbody::before { content: ""; display: block; height: 9px; }
td { height: 27px; padding: 0 0 0 8px; color: #6d6d6d; white-space: nowrap; }
td:first-child { padding-left: 28px; color: #000; }
td:last-child { padding: 0 9px 0 0; text-align: right; }
td svg { display: inline-block; vertical-align: -3px; width: 15px; height: 19px; margin-right: 7px; }
td svg.fo { width: 12px; height: 17px; margin-right: 10px; vertical-align: -2px; }
td svg.xl { width: 20px; height: 20px; margin: -1px 5px -1px -3px; }
.scroll { width: 16px; flex: none; display: flex; flex-direction: column; background: #f0f0f0; }
.scroll button { height: 21px; display: grid; place-items: center; padding-left: 3px; }
.scroll .down { height: 36px; padding-top: 14px; }
.thumb { flex: 1; background: #cdcdcd; }

/* status bar */
.status { display: flex; align-items: center; height: 29px; flex: none; padding: 0 6px 0 13px; color: #26466d; }
.count { padding-right: 12px; border-right: 1px solid #e6e6e6; line-height: 13px; }
.details { width: 28px; height: 29px; display: grid; place-items: center; background: #cde8f6; border: 1px solid #26a0da; }
.thumbs { margin-left: 5px; }

/* call window */
.call { position: absolute; right: 20px; bottom: 70px; width: 350px; padding: 12px 16px; height: 200px; display: flex; flex-direction: column; justify-content: space-between; background: linear-gradient(#0c0c0c, #171717 30%); color: #fff; box-shadow: 0 2px 10px rgba(0, 0, 0, .35); font-size: 12px; }
.callhead { display: flex; justify-content: space-between; align-items: center; padding-right: 6px; }
.callhead button { padding-top: 6px; }
.callhead h2 { font-size: 17px; line-height: 22px; }
.call p { padding-top: 6px; white-space: nowrap; }
.callbtns { display: flex; align-self: center; border-radius: 3px; overflow: hidden; background: #383838; }
.callbtns button { width: 45px; height: 45px; display: grid; place-items: center; }
.callbtns .hang { background: #9c2d41; }

/* taskbar */
.taskbar { display: flex; height: 50px; flex: none; background: linear-gradient(90deg, #22303a, #23323a 30%, #212c34 60%, #2b2f31 75%, #1f2d36 85%, #1b2a34); color: #fff; }
.task { position: relative; width: 62px; display: grid; place-items: center; flex: none; }
.narrow { width: 60px; }
.task-view { width: 63px; }
.run::after { content: ""; position: absolute; left: 6px; right: 5px; bottom: 0; height: 3px; background: #9fcdf8; }
.multi::after { background: linear-gradient(90deg, #9fcdf8 40px, #7f9fc4 40px); }
.current { background: linear-gradient(90deg, #4f5b62 56px, #333f46 56px); }
.current::after { left: 0; right: 1px; }
.notes { background: linear-gradient(90deg, #a96a33 56px, #a05c22 56px); }
.notes::after { content: ""; position: absolute; left: 0; right: 0; bottom: 0; height: 3px; background: #ff7800; }
.tray { display: flex; }
.tray button { width: 30px; display: grid; place-items: center; }
.lang { width: 46px; }
.clock { width: 82px; display: flex; flex-direction: column; justify-content: center; align-items: center; line-height: 23px; }
.notif { width: 52px; display: grid; place-items: center; }
.peek { width: 6px; margin-left: 9px; border-left: 1px solid #66727a; flex: none; }
```
